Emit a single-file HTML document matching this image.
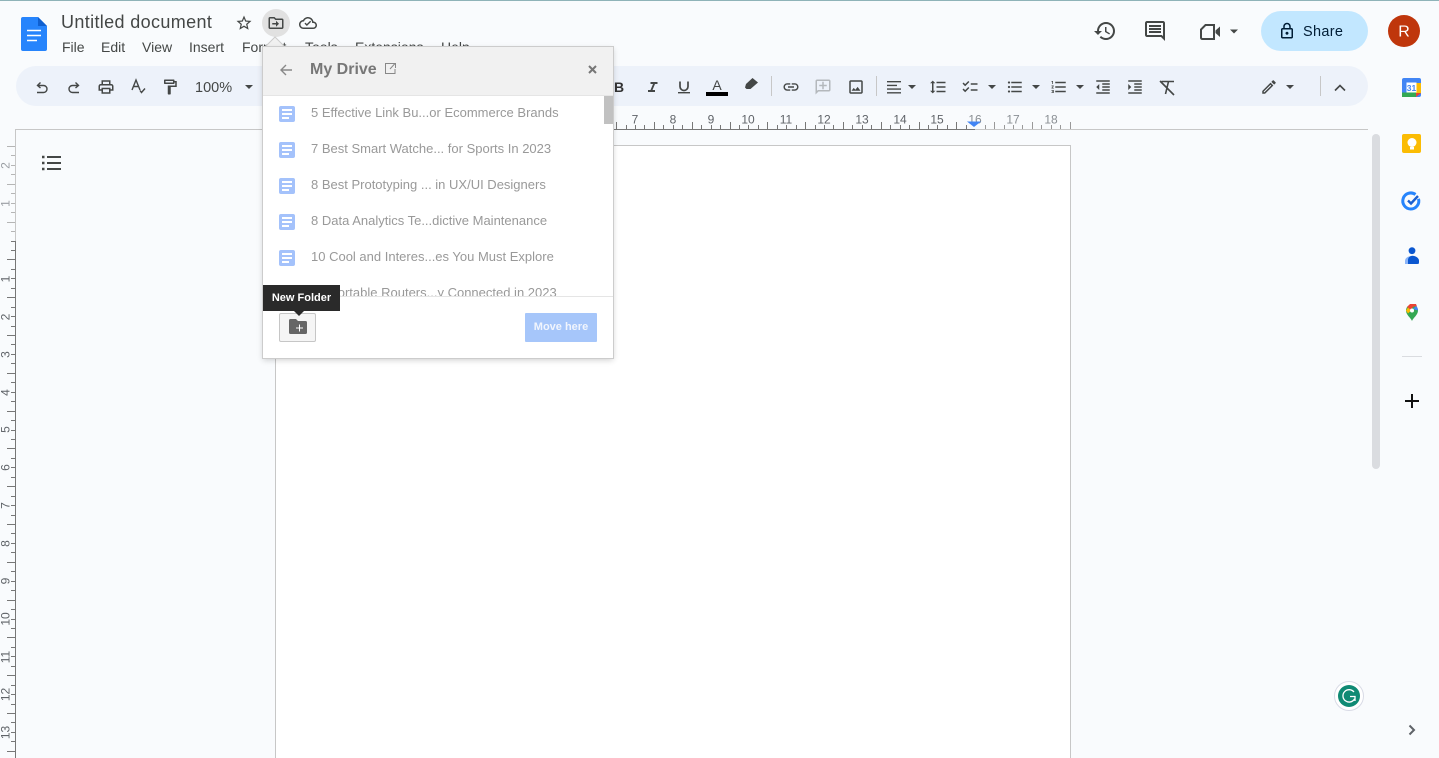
<!DOCTYPE html>
<html lang="en"><head><meta charset="utf-8"><title>Untitled document</title>
<style>
html,body{margin:0;padding:0;width:1439px;height:758px;overflow:hidden;background:#f9fbfd;font-family:"Liberation Sans",sans-serif;color:#3c4043}
body{position:relative}
.a{position:absolute;white-space:nowrap}
#top{left:0;top:0;width:1439px;height:1px;background:#8fb3b8}
#tb{left:16px;top:66px;width:1352px;height:40px;border-radius:20px;background:#edf2fa}
#page{left:275px;top:145px;width:794px;height:612px;background:#fff;border:1px solid #c7c7c7;border-bottom:0}
#main{left:0;top:0}
#dlg{left:263px;top:47px;width:350px;height:311px;background:#fff;box-shadow:0 0 0 1px #ccc,0 2px 6px rgba(0,0,0,.2);overflow:hidden}
#hd{left:0;top:0;width:350px;height:48px;background:#f1f1f1;border-bottom:1px solid #e5e5e5}
.r{left:48px;font-size:13px;line-height:16px;color:#999}
.d{left:16px;width:16px;height:16px;background:#a4c2fb;border-radius:2px}
.d i{position:absolute;left:3px;height:2px;background:#fff}
#ft{left:0;top:249px;width:350px;height:62px;background:#fff;border-top:1px solid #e5e5e5}
</style></head><body>
<div class="a" id="top"></div>
<div class="a" id="tb"></div>
<div class="a" id="page"></div>

<svg class="a" id="main" width="1439" height="758" viewBox="0 0 1439 758" fill="#444746" font-family="Liberation Sans, sans-serif">
<!-- doc icon -->
<path d="M23 17H38L47 26V49a2 2 0 0 1-2 2H23a2 2 0 0 1-2-2V19a2 2 0 0 1 2-2z" fill="#2684fc"/>
<path d="M38 17L47 26H38z" fill="#0f5fd0"/>
<path d="M27 30.500h14M27 35.500h14M27 40.500h10" stroke="#fff" stroke-width="1.600" fill="none"/>
<text x="61" y="28" font-size="18" letter-spacing=".36" fill="#444746">Untitled document</text>

<circle cx="276" cy="23" r="14" fill="#e1e1e1"/>
<g transform="translate(235,14) scale(.75)"><path d="M22 9.240l-7.190-.620L12 2 9.190 8.630 2 9.240l5.460 4.730L5.820 21 12 17.270 18.180 21l-1.630-7.030L22 9.240zM12 15.400l-3.760 2.270 1-4.280-3.320-2.880 4.380-.380L12 6.100l1.710 4.040 4.380.380-3.320 2.880 1 4.280L12 15.400z"/></g>
<g transform="translate(267,14) scale(.75)"><path d="M20 6h-8l-2-2H4c-1.110 0-1.990.890-1.990 2L2 18c0 1.110.890 2 2 2h16c1.110 0 2-.890 2-2V8c0-1.110-.890-2-2-2zm0 12H4V6h5.170l2 2H20v10z"/><path d="M12 17l4-4-4-4v3H7v2h5v3z"/></g>
<g transform="translate(299,14) scale(.75)"><path d="M19.350 10.040C18.670 6.590 15.640 4 12 4 9.110 4 6.600 5.640 5.350 8.040 2.340 8.360 0 10.910 0 14c0 3.310 2.690 6 6 6h13c2.760 0 5-2.240 5-5 0-2.640-2.050-4.780-4.650-4.960zM19 18H6c-2.210 0-4-1.790-4-4s1.790-4 4-4h.710C7.370 7.690 9.480 6 12 6c3.040 0 5.500 2.460 5.500 5.500v.5H19c1.660 0 3 1.340 3 3s-1.340 3-3 3z"/><path d="M10.500 16l-3.200-3.200 1.300-1.300 1.900 1.900 4.400-4.400 1.300 1.300z"/></g>

<text x="62" y="52" font-size="14">File</text>
<text x="101" y="52" font-size="14">Edit</text>
<text x="142" y="52" font-size="14">View</text>
<text x="189" y="52" font-size="14">Insert</text>
<text x="242" y="52" font-size="14">Format</text>
<text x="305" y="52" font-size="14">Tools</text>
<text x="355" y="52" font-size="14">Extensions</text>
<text x="441" y="52" font-size="14">Help</text>

<!-- toolbar left -->
<g fill="none" stroke="#444746" stroke-width="1.400">
<path d="M40.500 82.500L37.500 85.500L40.500 88M37.500 85.500H43.500A3.500 3.500 0 0 1 43.500 92.500H37"/>
<path d="M75.500 82.500L78.500 85.500L75.500 88M78.500 85.500H72.500A3.500 3.500 0 0 0 72.500 92.500H79"/>
<path d="M132 90L136 80L140 90M133.500 86.500H138.500M140 90.500L141.500 92.500L145 88.500"/>
</g>
<g transform="translate(97,78) scale(.75)"><path d="M19 8h-1V3H6v5H5c-1.660 0-3 1.340-3 3v6h4v4h12v-4h4v-6c0-1.660-1.340-3-3-3zM8 5h8v3H8V5zm8 12v2H8v-4h8v2zm2-2v-2H6v2H4v-4c0-.550.450-1 1-1h14c.550 0 1 .450 1 1v4h-2z"/></g>
<g transform="translate(161,78) scale(.75)"><path d="M18 4V3c0-.550-.450-1-1-1H5c-.550 0-1 .450-1 1v4c0 .550.450 1 1 1h12c.550 0 1-.450 1-1V6h1v4H9v11c0 .550.450 1 1 1h2c.550 0 1-.450 1-1v-9h8V4h-3zm-2 2H6V4h10v2z"/></g>
<text x="195" y="92" font-size="14.500">100%</text>
<path d="M245 85h8l-4 4z"/>

<!-- format -->
<text x="614" y="92" font-size="14" font-weight="bold" fill="#333">B</text>
<path d="M650.500 82H657.500V84H655L652.500 90H655V92H648V90H650.500L653 84H650.500z"/>
<path d="M680 81.500V86.500A4 4 0 0 0 688 86.500V81.500" fill="none" stroke="#444746" stroke-width="1.700"/>
<path d="M678 92.700h12" stroke="#444746" stroke-width="1.400"/>
<text x="717" y="90" font-size="14" fill="#444746" text-anchor="middle">A</text>
<rect x="706" y="92" width="22" height="4" fill="#000"/>
<path d="M752.500 78L758 82.500L750.500 89H746.500L745 87.500L746 84z" fill="#444746"/>
<path d="M771.500 76v20M876.500 76v20M1320.500 76v20" stroke="#c7c7c7"/>
<g transform="translate(782,78) scale(.75)"><path d="M3.900 12c0-1.710 1.390-3.100 3.100-3.100h4V7H7c-2.760 0-5 2.240-5 5s2.240 5 5 5h4v-1.900H7c-1.710 0-3.100-1.390-3.100-3.100zM8 13h8v-2H8v2zm9-6h-4v1.900h4c1.710 0 3.100 1.390 3.100 3.100s-1.390 3.100-3.100 3.100h-4V17h4c2.760 0 5-2.240 5-5s-2.240-5-5-5z"/></g>
<g transform="translate(832,78) scale(-.75,.75)" fill="#b4b8bc"><path d="M22 4c0-1.100-.9-2-2-2H4c-1.100 0-2 .9-2 2v12c0 1.100.9 2 2 2h14l4 4V4zm-2 13.170L18.830 16H4V4h16v13.170zM13 5h-2v4H7v2h4v4h2v-4h4V9h-4z"/></g>
<g transform="translate(847,78) scale(.75)"><path d="M19 5v14H5V5h14m0-2H5c-1.100 0-2 .9-2 2v14c0 1.100.9 2 2 2h14c1.100 0 2-.9 2-2V5c0-1.100-.9-2-2-2zm-4.860 8.860-3 3.870L9 13.140 6 17h12l-3.860-5.140z"/></g>
<path d="M887 81h14v1.400H887zM887 84.700h10v1.400H887zM887 88.400h14v1.400H887zM887 92.100h14v1.400H887z"/>
<path d="M908 85h8l-4 4z"/>
<g transform="translate(929,78) scale(.75)"><path d="M6 7h2.500L5 3.500 1.500 7H4v10H1.500L5 20.500 8.500 17H6V7zm4-2v2h12V5H10zm0 14h12v-2H10v2zm0-6h12v-2H10v2z"/></g>
<g transform="translate(961,78) scale(.75)"><path d="M22 7h-9v2h9V7zm0 8h-9v2h9v-2zM5.540 11 2 7.460l1.410-1.410 2.120 2.120 4.240-4.240 1.410 1.410L5.540 11zm0 8L2 15.460l1.410-1.410 2.120 2.120 4.240-4.240 1.410 1.410L5.540 19z"/></g>
<path d="M988 85h8l-4 4z"/>
<g transform="translate(1006,78) scale(.75)"><path d="M4 10.500c-.830 0-1.500.670-1.500 1.500s.670 1.500 1.500 1.500 1.500-.670 1.500-1.500-.670-1.500-1.500-1.500zm0-6c-.830 0-1.500.670-1.500 1.500S3.170 7.500 4 7.500 5.500 6.830 5.500 6 4.830 4.500 4 4.500zm0 12c-.830 0-1.500.680-1.500 1.500s.680 1.500 1.500 1.500 1.500-.680 1.500-1.500-.670-1.500-1.500-1.500zM7 19h14v-2H7v2zm0-6h14v-2H7v2zm0-8v2h14V5H7z"/></g>
<path d="M1032 85h8l-4 4z"/>
<g transform="translate(1050,78) scale(.75)"><path d="M2 17h2v.5H3v1h1v.5H2v1h3v-4H2v1zm1-9h1V4H2v1h1v3zm-1 3h1.800L2 13.100v.9h3v-1H3.200L5 10.900V10H2v1zm5-6v2h14V5H7zm0 14h14v-2H7v2zm0-6h14v-2H7v2z"/></g>
<path d="M1076 85h8l-4 4z"/>
<g transform="translate(1094,78) scale(.75)"><path d="M11 17h10v-2H11v2zm-8-5l4 4V8l-4 4zm0 9h18v-2H3v2zM3 3v2h18V3H3zm8 6h10V7H11v2zm0 4h10v-2H11v2z"/></g>
<g transform="translate(1126,78) scale(.75)"><path d="M3 21h18v-2H3v2zM3 8v8l4-4-4-4zm8 9h10v-2H11v2zM3 3v2h18V3H3zm8 6h10V7H11v2zm0 4h10v-2H11v2z"/></g>
<path d="M1161.500 81.500H1174M1168.500 81.500L1165.500 94M1160 81L1174 95" fill="none" stroke="#444746" stroke-width="1.600"/>
<g transform="translate(1260,78) scale(.75)"><path d="M3 17.250V21h3.750L17.810 9.940l-3.750-3.750L3 17.250zM5.920 19H5v-.92l9.060-9.060.92.920L5.920 19zM20.710 5.630l-2.340-2.340c-.2-.2-.450-.290-.710-.290s-.510.1-.7.290l-1.830 1.830 3.750 3.750 1.830-1.830c.390-.390.390-1.020 0-1.410z"/></g>
<path d="M1286 85h8l-4 4z"/>
<path d="M1335 90.500L1340 85.500L1345 90.500" fill="none" stroke="#444746" stroke-width="1.600"/>

<!-- top right -->
<g transform="translate(1093,19)"><path d="M13 3c-4.970 0-9 4.030-9 9H1l3.890 3.890.07.140L9 12H6c0-3.870 3.130-7 7-7s7 3.130 7 7-3.130 7-7 7c-1.930 0-3.680-.790-4.940-2.060l-1.420 1.420C8.270 19.990 10.510 21 13 21c4.970 0 9-4.030 9-9s-4.030-9-9-9zm-1 5v5l4.280 2.540.720-1.210-3.500-2.080V8H12z"/></g>
<g transform="translate(1143,19)"><path d="M20 2H4c-1.100 0-2 .9-2 2v12c0 1.100.9 2 2 2h14l4 4V4c0-1.100-.9-2-2-2zm0 15.170L18.830 16H4V4h16v13.170zM6 12h12v2H6zm0-3h12v2H6zm0-3h12v2H6z"/></g>
<path d="M1205.500 25H1214V39H1202.500Q1201 39 1201 37.500V29.500Z" fill="none" stroke="#444746" stroke-width="2"/>
<path d="M1215.500 30.500L1220 26.500V37L1215.500 33z"/>
<path d="M1230 29.500h8l-4 4z"/>
<rect x="1261" y="11" width="107" height="40" rx="20" fill="#c2e7ff"/>
<g transform="translate(1278,22) scale(.75)" fill="#001d35"><path d="M18 8h-1V6c0-2.760-2.240-5-5-5S7 3.240 7 6v2H6c-1.100 0-2 .9-2 2v10c0 1.100.9 2 2 2h12c1.100 0 2-.9 2-2V10c0-1.100-.9-2-2-2zM9 6c0-1.660 1.340-3 3-3s3 1.340 3 3v2H9V6zm9 14H6V10h12v10zm-6-3c1.100 0 2-.9 2-2s-.9-2-2-2-2 .9-2 2 .9 2 2 2z"/></g>
<text x="1303" y="36" font-size="14.500" fill="#001d35" letter-spacing=".3">Share</text>
<circle cx="1404" cy="31" r="16" fill="#bf360c"/>
<text x="1404" y="36.500" font-size="16" fill="#fff" text-anchor="middle">R</text>

<!-- rulers -->
<path d="M15 129.500H613M975 129.500H1368M15.500 129V241" stroke="#c7c7c7" fill="none"/>
<path d="M613 129.500H975M15.500 241V758" stroke="#777" fill="none"/>
<path stroke="#777" fill="none" d="M616.500 122V129M626.500 125V129M635.500 125V129M644.500 125V129M654.500 122V129M663.500 125V129M673.500 125V129M682.500 125V129M692.500 122V129M701.500 125V129M711.500 125V129M720.500 125V129M730.500 122V129M739.500 125V129M748.500 125V129M758.500 125V129M767.500 122V129M777.500 125V129M786.500 125V129M796.500 125V129M805.500 122V129M815.500 125V129M824.500 125V129M833.500 125V129M843.500 122V129M852.500 125V129M862.500 125V129M871.500 125V129M881.500 122V129M890.500 125V129M900.500 125V129M909.500 125V129M919.500 122V129M928.500 125V129M937.500 125V129M947.500 125V129M956.500 122V129M966.500 125V129"/>
<path stroke="#999" fill="none" d="M985.500 125V129M994.500 122V129M1004.500 125V129M1013.500 125V129M1022.500 125V129M1032.500 122V129M1041.500 125V129M1051.500 125V129M1060.500 125V129M1070.500 122V129"/>
<path stroke="#b5b5b5" fill="none" d="M7 146.500H15M11 155.500H15M11 165.500H15M11 174.500H15M7 184.500H15M11 193.500H15M11 203.500H15M11 212.500H15M7 222.500H15M11 231.500H15"/>
<path stroke="#777" fill="none" d="M11 241.500H15M11 250.500H15M7 259.500H15M11 269.500H15M11 278.500H15M11 288.500H15M7 297.500H15M11 307.500H15M11 316.500H15M11 326.500H15M7 335.500H15M11 344.500H15M11 354.500H15M11 363.500H15M7 373.500H15M11 382.500H15M11 392.500H15M11 401.500H15M7 411.500H15M11 420.500H15M11 430.500H15M11 439.500H15M7 448.500H15M11 458.500H15M11 467.500H15M11 477.500H15M7 486.500H15M11 496.500H15M11 505.500H15M11 515.500H15M7 524.500H15M11 533.500H15M11 543.500H15M11 552.500H15M7 562.500H15M11 571.500H15M11 581.500H15M11 590.500H15M7 600.500H15M11 609.500H15M11 619.500H15M11 628.500H15M7 637.500H15M11 647.500H15M11 656.500H15M11 666.500H15M7 675.500H15M11 685.500H15M11 694.500H15M11 704.500H15M7 713.500H15M11 722.500H15M11 732.500H15M11 741.500H15M7 751.500H15"/>
<g font-size="12" fill="#5f6368" text-anchor="middle">
<text x="635" y="123.500">7</text><text x="673" y="123.500">8</text><text x="711" y="123.500">9</text><text x="748" y="123.500">10</text><text x="786" y="123.500">11</text><text x="824" y="123.500">12</text><text x="862" y="123.500">13</text><text x="900" y="123.500">14</text><text x="937" y="123.500">15</text><text x="975" y="123.500" fill="#8a8f94">16</text><text x="1013" y="123.500" fill="#8a8f94">17</text><text x="1051" y="123.500" fill="#8a8f94">18</text>
<g fill="#9a9ea3"><text transform="translate(9.500,165.500) rotate(-90)">2</text><text transform="translate(9.500,203.500) rotate(-90)">1</text></g>
<text transform="translate(9.500,279) rotate(-90)">1</text><text transform="translate(9.500,317) rotate(-90)">2</text><text transform="translate(9.500,354.500) rotate(-90)">3</text><text transform="translate(9.500,392.500) rotate(-90)">4</text><text transform="translate(9.500,429.500) rotate(-90)">5</text><text transform="translate(9.500,467.500) rotate(-90)">6</text><text transform="translate(9.500,505.500) rotate(-90)">7</text><text transform="translate(9.500,543.500) rotate(-90)">8</text><text transform="translate(9.500,581) rotate(-90)">9</text><text transform="translate(9.500,619) rotate(-90)">10</text><text transform="translate(9.500,657) rotate(-90)">11</text><text transform="translate(9.500,694.500) rotate(-90)">12</text><text transform="translate(9.500,732.500) rotate(-90)">13</text>
</g>
<path d="M967 121.500H981L974 127z" fill="#4285f4"/>

<!-- outline icon -->
<path d="M47 157H61M47 163H61M47 169H61" stroke="#444746" stroke-width="2" fill="none"/>
<path d="M42 155.800h2.500v2.500h-2.500zM42 161.800h2.500v2.500h-2.500zM42 167.800h2.500v2.500h-2.500z" fill="#444746"/>

<!-- scrollbar -->
<rect x="1372" y="134" width="8" height="335" rx="4" fill="#dadce0"/>

<!-- side icons -->
<rect x="1402" y="78" width="19" height="19" rx="2" fill="#4285f4"/>
<rect x="1416" y="83" width="5" height="10" fill="#fbbc04"/>
<rect x="1402" y="92.500" width="14" height="4.500" fill="#34a853"/>
<path d="M1416 97V93H1421z" fill="#ea4335"/>
<rect x="1406.500" y="82.500" width="10" height="10" fill="#fff"/>
<text x="1411.500" y="91" font-size="8.500" font-weight="bold" fill="#4285f4" text-anchor="middle">31</text>
<rect x="1402" y="134" width="19" height="19" rx="2" fill="#fbbc04"/>
<circle cx="1412" cy="142.500" r="4.500" fill="#fff"/><rect x="1410" y="147" width="4" height="2.500" fill="#fff"/>
<path d="M1418.500 198.800A8 8 0 1 1 1415.500 194.500" fill="none" stroke="#2684fc" stroke-width="3"/>
<path d="M1408 200.500L1411 203.500L1418 196" fill="none" stroke="#1a5fd0" stroke-width="2.400"/>
<circle cx="1412" cy="250.700" r="3.400" fill="#0b57d0"/>
<path d="M1405 264v-3c0-3 3-5 7-5s7 2 7 5v3z" fill="#8ab4f8"/>
<path d="M1408 264v-4c0-2.500 2-4.300 4.500-4.300s6.500 2 6.500 5v1.300a2 2 0 0 1-2 2z" fill="#0b57d0"/>
<path d="M1412 321c-1-3-6-6-6-10.500a6 6 0 0 1 12 0c0 4.500-5 7.500-6 10.500z" fill="#34a853"/>
<path d="M1407 307l3.500 3 3-3.500 3.500 0-1 -2.500h-6z" fill="#ea4335"/>
<path d="M1418 310.500a6 6 0 0 0-2-4.500l-3 3z" fill="#4285f4"/>
<path d="M1406 310.500l2 3 3-3-3-3z" fill="#fbbc04"/>
<circle cx="1412" cy="310.500" r="2" fill="#fff"/>
<path d="M1402 356.500H1422" stroke="#dadce0" fill="none"/>
<path d="M1405 401H1419M1412 394V408" stroke="#111" stroke-width="2" fill="none"/>
<path d="M1409.500 725.500L1414 730L1409.500 734.500" stroke="#5f6368" stroke-width="2" fill="none"/>

<!-- grammarly -->
<circle cx="1349" cy="696" r="14.500" fill="#fff" stroke="#d9dbe6"/>
<circle cx="1349" cy="696" r="11" fill="#0f8a74"/>
<path d="M1354 692A6.200 6.200 0 1 0 1354.500 699M1350 696.500H1355V701" fill="none" stroke="#fff" stroke-width="1.300"/>
</svg>

<!-- dialog -->
<svg class="a" style="left:263px;top:36px" width="24" height="12" viewBox="0 0 24 12"><path d="M1 12L12 1L23 12z" fill="#f1f1f1" stroke="#ccc"/></svg>
<div class="a" id="dlg">
  <div class="a" id="hd"></div>
  <svg class="a" style="left:0;top:0" width="350" height="48" viewBox="0 0 350 48" fill="none">
    <path d="M29 23H18M23 18L18 23L23 28" stroke="#888" stroke-width="1.400"/>
    <path d="M132 17V16.500H122.500V26.500H132V22M127 22L132 16.500M128 16.500H132.500V21" stroke="#888"/>
    <path d="M326 19L333 26M333 19L326 26" stroke="#777" stroke-width="2"/>
  </svg>
  <div class="a" style="left:47px;top:13px;font-size:16px;line-height:20px;font-weight:bold;color:#777">My Drive</div>

  <div class="a d" style="top:59px"><i style="top:3px;width:10px"></i><i style="top:7px;width:10px"></i><i style="top:11px;width:7px"></i></div>
  <div class="a r" style="top:58px">5 Effective Link Bu...or Ecommerce Brands</div>
  <div class="a d" style="top:95px"><i style="top:3px;width:10px"></i><i style="top:7px;width:10px"></i><i style="top:11px;width:7px"></i></div>
  <div class="a r" style="top:94px">7 Best Smart Watche... for Sports In 2023</div>
  <div class="a d" style="top:131px"><i style="top:3px;width:10px"></i><i style="top:7px;width:10px"></i><i style="top:11px;width:7px"></i></div>
  <div class="a r" style="top:130px">8 Best Prototyping ... in UX/UI Designers</div>
  <div class="a d" style="top:167px"><i style="top:3px;width:10px"></i><i style="top:7px;width:10px"></i><i style="top:11px;width:7px"></i></div>
  <div class="a r" style="top:166px">8 Data Analytics Te...dictive Maintenance</div>
  <div class="a d" style="top:203px"><i style="top:3px;width:10px"></i><i style="top:7px;width:10px"></i><i style="top:11px;width:7px"></i></div>
  <div class="a r" style="top:202px">10 Cool and Interes...es You Must Explore</div>
  <div class="a r" style="top:238px">10 Portable Routers...y Connected in 2023</div>
  <div class="a" style="left:341px;top:49px;width:9px;height:28px;background:#c1c1c1"></div>

  <div class="a" id="ft"></div>
  <div class="a" style="left:16px;top:266px;width:35px;height:27px;background:#f5f5f5;border:1px solid #c6c6c6;border-radius:2px"></div>
  <svg class="a" style="left:26px;top:272px" width="18" height="15" viewBox="0 0 18 15"><path d="M1.500 0H7L9 2H16.500A1.500 1.500 0 0 1 18 3.500V13.500A1.500 1.500 0 0 1 16.500 15H1.500A1.500 1.500 0 0 1 0 13.500V1.500A1.500 1.500 0 0 1 1.500 0z" fill="#666"/><path d="M10.500 5.500V12.500M7 9H14" stroke="#fff"/></svg>
  <div class="a" style="left:262px;top:266px;width:72px;height:29px;background:#a6c6fa;border-radius:1px;color:#f1f5fd;font-size:11px;font-weight:bold;line-height:29px;text-align:center">Move here</div>
  <div class="a" style="left:0;top:238px;width:77px;height:26px;background:#2a2a2a;color:#fff;font-size:11px;font-weight:bold;line-height:26px;text-align:center">New Folder</div>
  <div class="a" style="left:31px;top:264px;width:0;height:0;border:5px solid transparent;border-top-color:#2a2a2a;border-bottom:0"></div>
</div>
</body></html>
